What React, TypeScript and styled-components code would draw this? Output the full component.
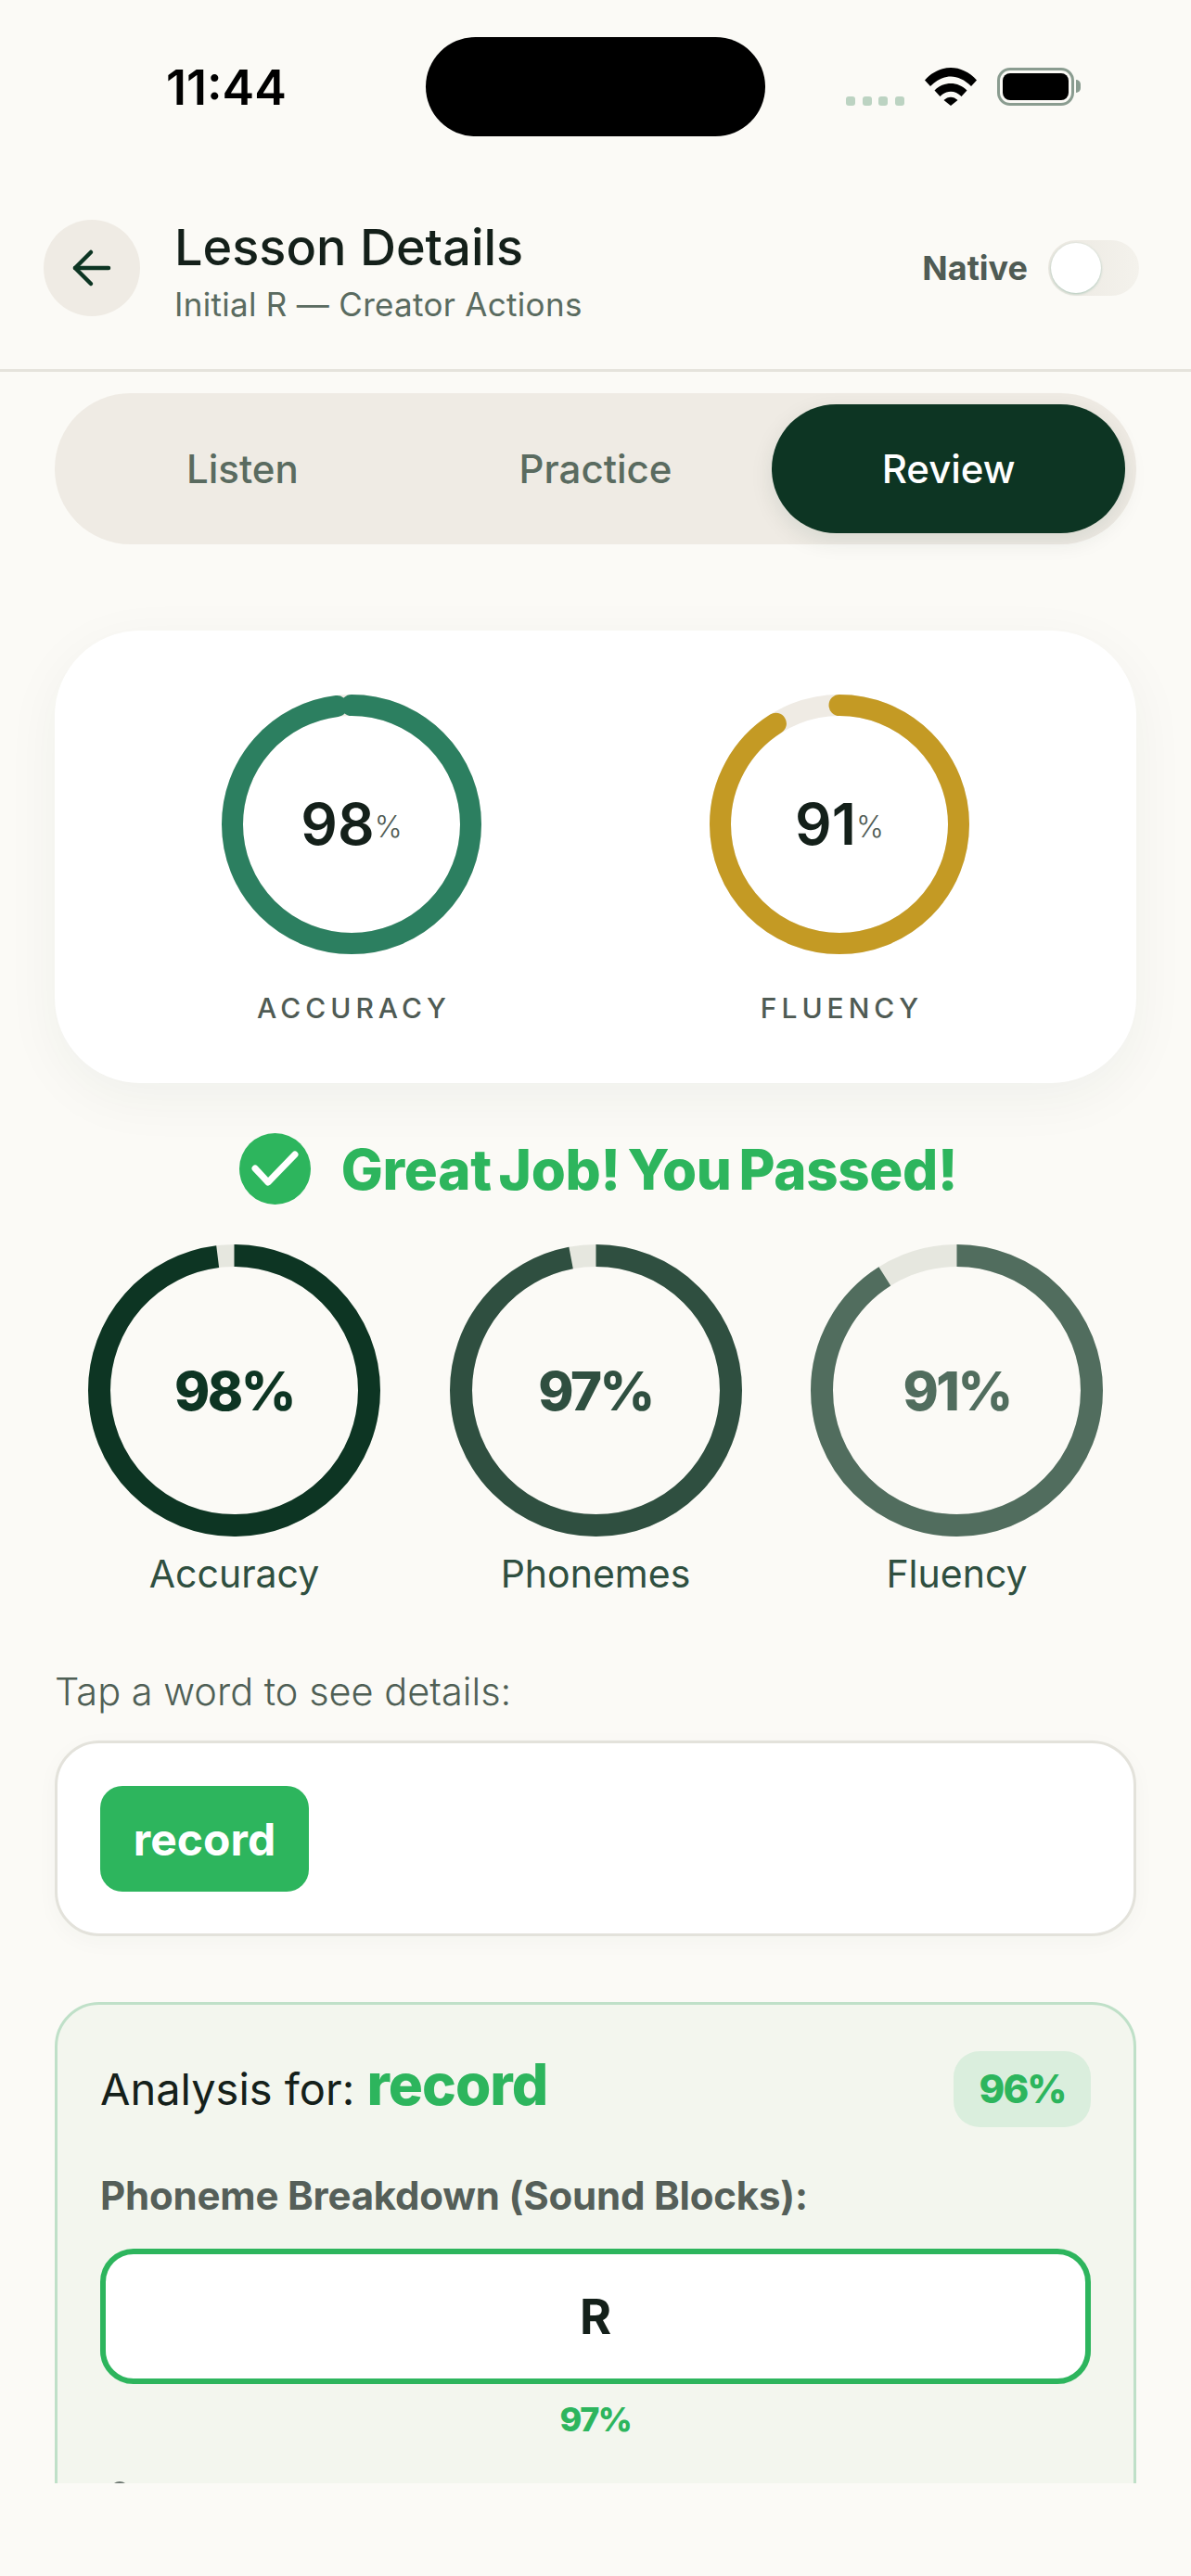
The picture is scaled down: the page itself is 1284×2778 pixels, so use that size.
import styled, { createGlobalStyle } from 'styled-components';

const GlobalStyle = createGlobalStyle`
  html, body {
    margin: 0;
    padding: 0;
    background: #fbfaf6;
    font-family: Inter, "Noto Sans", sans-serif;
  }
  * {
    box-sizing: border-box;
  }
`;

function Ring({
  size,
  stroke,
  value,
  color,
  track,
  round,
}: {
  size: number;
  stroke: number;
  value: number;
  color: string;
  track: string;
  round?: boolean;
}) {
  const r = (size - stroke) / 2;
  const c = 2 * Math.PI * r;
  return (
    <RingSvg width={size} height={size} viewBox={`0 0 ${size} ${size}`}>
      <circle cx={size / 2} cy={size / 2} r={r} fill="none" stroke={track} strokeWidth={stroke} />
      <circle
        cx={size / 2}
        cy={size / 2}
        r={r}
        fill="none"
        stroke={color}
        strokeWidth={stroke}
        strokeLinecap={round ? 'round' : 'butt'}
        strokeDasharray={`${(c * value) / 100} ${c}`}
        transform={`rotate(-90 ${size / 2} ${size / 2})`}
      />
    </RingSvg>
  );
}

const metrics = [
  { label: 'Accuracy', value: 98, color: '#0d3523' },
  { label: 'Phonemes', value: 97, color: '#2f4f40' },
  { label: 'Fluency', value: 91, color: '#516d5e' },
];

const tabs = ['Listen', 'Practice', 'Review'];

export default function App() {
  return (
    <Screen>
      <GlobalStyle />
      <StatusBar>
        <Time>11:44</Time>
        <Island />
        <StatusIcons>
          <SignalDots>
            <Dot />
            <Dot />
            <Dot />
            <Dot />
          </SignalDots>
          <svg width="56" height="41" viewBox="0 0 56 41">
            <path d="M0 13.5 C16-4.500 40-4.500 56 13.500 L50 20 C36 6 20 6 6 20 Z" fill="#000" />
            <path d="M10.500 24.500 C20 14.500 36 14.500 45.500 24.500 L39.500 31 C32.500 24 23.500 24 16.500 31 Z" fill="#000" />
            <path d="M20.500 35 C25 30.500 31 30.500 35.500 35 L28 41 Z" fill="#000" />
          </svg>
          <Battery>
            <BatteryFill />
          </Battery>
        </StatusIcons>
      </StatusBar>

      <Header>
        <BackButton>
          <svg width="44" height="44" viewBox="0 0 44 44" fill="none" stroke="#0d3523" strokeWidth="4.500" strokeLinecap="round" strokeLinejoin="round">
            <path d="M40 22H4" />
            <path d="M21 5L4 22l17 17" />
          </svg>
        </BackButton>
        <HeaderText>
          <Title>Lesson Details</Title>
          <Subtitle>Initial R — Creator Actions</Subtitle>
        </HeaderText>
        <NativeLabel>Native</NativeLabel>
        <Toggle>
          <Knob />
        </Toggle>
      </Header>

      <Content>
        <Tabs>
          {tabs.map(tab => (
            <Tab key={tab} $active={tab === 'Review'}>
              {tab}
            </Tab>
          ))}
        </Tabs>

        <ScoreCard>
          <ScoreItem>
            <RingWrap>
              <Ring size={280} stroke={23} value={98} color="#2c7f60" track="#efebe4" round />
              <RingCenter>
                <ScoreNumber>98</ScoreNumber>
                <ScoreUnit>%</ScoreUnit>
              </RingCenter>
            </RingWrap>
            <ScoreLabel>ACCURACY</ScoreLabel>
          </ScoreItem>
          <ScoreItem>
            <RingWrap>
              <Ring size={280} stroke={23} value={91} color="#c49a24" track="#efebe4" round />
              <RingCenter>
                <ScoreNumber>91</ScoreNumber>
                <ScoreUnit>%</ScoreUnit>
              </RingCenter>
            </RingWrap>
            <ScoreLabel>FLUENCY</ScoreLabel>
          </ScoreItem>
        </ScoreCard>

        <PassedRow>
          <svg width="77" height="77" viewBox="0 0 77 77">
            <circle cx="38.500" cy="38.500" r="38.500" fill="#2db55d" />
            <path d="M17 38l14 15 29-30" fill="none" stroke="#fff" strokeWidth="7" strokeLinecap="round" strokeLinejoin="round" />
          </svg>
          <PassedText>Great Job! You Passed!</PassedText>
        </PassedRow>

        <MetricRow>
          {metrics.map(m => (
            <Metric key={m.label}>
              <RingWrap>
                <Ring size={315} stroke={24} value={m.value} color={m.color} track="#e6e7df" />
                <RingCenter>
                  <MetricValue $color={m.color}>{m.value}%</MetricValue>
                </RingCenter>
              </RingWrap>
              <MetricLabel>{m.label}</MetricLabel>
            </Metric>
          ))}
        </MetricRow>

        <Hint>Tap a word to see details:</Hint>
        <WordBox>
          <WordChip>record</WordChip>
        </WordBox>

        <AnalysisCard>
          <AnalysisHead>
            <AnalysisTitle>
              Analysis for: <AnalysisWord>record</AnalysisWord>
            </AnalysisTitle>
            <ScoreChip>96%</ScoreChip>
          </AnalysisHead>
          <BreakdownTitle>Phoneme Breakdown (Sound Blocks):</BreakdownTitle>
          <PhonemeBox>R</PhonemeBox>
          <PhonemeScore>97%</PhonemeScore>
          <NextMark />
        </AnalysisCard>
      </Content>
    </Screen>
  );
}

const Screen = styled.div`
  width: 1284px;
  height: 2778px;
  background: #fbfaf6;
  overflow: hidden;
`;

const StatusBar = styled.div`
  height: 188px;
  padding: 40px 119px 0 179px;
  display: flex;
  align-items: flex-start;
`;

const Time = styled.div`
  width: 280px;
  font-size: 52px;
  line-height: 109px;
  font-weight: 600;
  color: #000;
`;

const Island = styled.div`
  width: 366px;
  height: 107px;
  border-radius: 54px;
  background: #000;
`;

const StatusIcons = styled.div`
  display: flex;
  align-items: flex-end;
  margin: 33px 0 0 87px;
`;

const SignalDots = styled.div`
  display: flex;
  gap: 7.500px;
  margin-right: 22px;
`;

const Dot = styled.div`
  width: 10px;
  height: 10px;
  border-radius: 3px;
  background: #bcd3c2;
`;

const Battery = styled.div`
  position: relative;
  width: 83px;
  height: 41px;
  margin-left: 22px;
  padding: 3px;
  border: 3px solid #8a9c90;
  border-radius: 14px;

  &::after {
    content: '';
    position: absolute;
    right: -10px;
    top: 10px;
    width: 5px;
    height: 14px;
    border-radius: 0 6px 6px 0;
    background: #8a9c90;
  }
`;

const BatteryFill = styled.div`
  width: 100%;
  height: 100%;
  border-radius: 8px;
  background: #000;
`;

const Header = styled.div`
  height: 213px;
  padding: 49px 56px 0 47px;
  display: flex;
  align-items: flex-start;
  border-bottom: 3px solid #e5e3dc;
`;

const BackButton = styled.div`
  width: 104px;
  height: 104px;
  border-radius: 50%;
  background: #efebe4;
  display: flex;
  align-items: center;
  justify-content: center;
`;

const HeaderText = styled.div`
  margin-left: 37px;
  flex: 1;
`;

const Title = styled.div`
  font-size: 54px;
  line-height: 60px;
  font-weight: 500;
  color: #14201a;
`;

const Subtitle = styled.div`
  margin-top: 10px;
  font-size: 35px;
  line-height: 42px;
  letter-spacing: 0.300px;
  color: #5a6b60;
`;

const NativeLabel = styled.div`
  margin-top: 22px;
  font-size: 36px;
  line-height: 60px;
  font-weight: 700;
  color: #4f5b54;
`;

const Toggle = styled.div`
  margin: 22px 0 0 22px;
  width: 98px;
  height: 60px;
  padding: 3px;
  border-radius: 30px;
  background: linear-gradient(90deg, #ebe8e1, #f4f2ec);
`;

const Knob = styled.div`
  width: 54px;
  height: 54px;
  border-radius: 50%;
  background: #fff;
  box-shadow: 0 1px 3px rgba(44, 127, 96, 0.35);
`;

const Content = styled.div`
  padding: 23px 59px 0;
  height: 2277px;
  overflow: hidden;
`;

const Tabs = styled.div`
  height: 163px;
  padding: 12px;
  border-radius: 82px;
  background: #efebe4;
  display: grid;
  grid-template-columns: repeat(3, 1fr);
`;

const Tab = styled.div<{ $active: boolean }>`
  border-radius: 70px;
  display: flex;
  align-items: center;
  justify-content: center;
  font-size: 42px;
  font-weight: 500;
  color: ${props => (props.$active ? '#fff' : '#5a6b60')};
  background: ${props => (props.$active ? '#0d3523' : 'transparent')};
  box-shadow: ${props => (props.$active ? '0 8px 24px rgba(13, 53, 35, 0.1)' : 'none')};
`;

const ScoreCard = styled.div`
  margin-top: 93px;
  height: 488px;
  padding-top: 69px;
  border-radius: 92px;
  background: #fff;
  box-shadow: 0 16px 60px rgba(13, 53, 35, 0.05);
  display: flex;
  justify-content: center;
  gap: 246px;
`;

const ScoreItem = styled.div`
  width: 280px;
  display: flex;
  flex-direction: column;
  align-items: center;
`;

const RingWrap = styled.div`
  position: relative;
  line-height: 0;
`;

const RingSvg = styled.svg`
  display: block;
`;

const RingCenter = styled.div`
  position: absolute;
  inset: 0;
  display: flex;
  align-items: center;
  justify-content: center;
`;

const ScoreNumber = styled.span`
  font-size: 62px;
  line-height: 62px;
  font-weight: 600;
  color: #14201a;
`;

const ScoreUnit = styled.span`
  margin-top: 6px;
  font-size: 32px;
  line-height: 32px;
  font-weight: 300;
  color: #4f5b54;
`;

const ScoreLabel = styled.div`
  margin-top: 40px;
  margin-right: -5px;
  font-size: 30px;
  line-height: 36px;
  font-weight: 500;
  letter-spacing: 5px;
  color: #4f5b54;
`;

const PassedRow = styled.div`
  margin-top: 54px;
  padding-left: 6px;
  height: 77px;
  display: flex;
  align-items: center;
  justify-content: center;
  gap: 33px;
`;

const PassedText = styled.div`
  font-size: 60px;
  font-weight: 800;
  letter-spacing: -0.300px;
  word-spacing: -5px;
  color: #2db55d;
`;

const MetricRow = styled.div`
  margin-top: 43px;
  display: flex;
  justify-content: center;
  gap: 74.500px;
`;

const Metric = styled.div`
  width: 315px;
  display: flex;
  flex-direction: column;
  align-items: center;
`;

const MetricValue = styled.div<{ $color: string }>`
  font-size: 58px;
  line-height: 60px;
  font-weight: 800;
  letter-spacing: -2.500px;
  color: ${props => props.$color};
`;

const MetricLabel = styled.div`
  margin-top: 15px;
  font-size: 41px;
  line-height: 50px;
  color: #2f4f40;
`;

const Hint = styled.div`
  margin-top: 79px;
  font-size: 41.500px;
  line-height: 46px;
  font-weight: 300;
  color: #4f5f55;
`;

const WordBox = styled.div`
  margin-top: 30px;
  height: 211px;
  padding: 46px;
  border: 3px solid #e3e2db;
  border-radius: 48px;
  background: #fff;
  box-shadow: 0 6px 24px rgba(13, 53, 35, 0.03);
`;

const WordChip = styled.div`
  width: 225px;
  height: 114px;
  border-radius: 24px;
  background: #2db55d;
  display: flex;
  align-items: center;
  justify-content: center;
  font-size: 48px;
  font-weight: 700;
  color: #fff;
`;

const AnalysisCard = styled.div`
  margin-top: 71px;
  height: 700px;
  padding: 47px 46px 0;
  border: 3px solid #bfe0c8;
  border-radius: 48px;
  background: #f3f6ee;
`;

const AnalysisHead = styled.div`
  height: 82px;
  display: flex;
  align-items: center;
  justify-content: space-between;
`;

const AnalysisTitle = styled.div`
  margin-top: -5px;
  font-size: 47px;
  font-weight: 400;
  color: #14201a;
`;

const AnalysisWord = styled.span`
  font-size: 62px;
  font-weight: 800;
  letter-spacing: -1px;
  color: #2db55d;
`;

const ScoreChip = styled.div`
  margin-top: 5px;
  width: 148px;
  height: 82px;
  border-radius: 28px;
  background: #daeedd;
  display: flex;
  align-items: center;
  justify-content: center;
  font-size: 42px;
  font-weight: 800;
  letter-spacing: -2px;
  color: #2db55d;
`;

const BreakdownTitle = styled.div`
  margin-top: 52px;
  font-size: 42px;
  line-height: 50px;
  font-weight: 700;
  letter-spacing: -0.200px;
  color: #555f59;
`;

const PhonemeBox = styled.div`
  margin-top: 32px;
  height: 146px;
  border: 6px solid #2db55d;
  border-radius: 36px;
  background: #fff;
  display: flex;
  align-items: center;
  justify-content: center;
  font-size: 52px;
  font-weight: 700;
  color: #14201a;
`;

const PhonemeScore = styled.div`
  margin-top: 16px;
  text-align: center;
  font-size: 36px;
  line-height: 44px;
  font-weight: 800;
  letter-spacing: -1.500px;
  color: #2db55d;
`;

const NextMark = styled.div`
  margin: 45px 0 0 11px;
  width: 20px;
  height: 20px;
  border-radius: 50%;
  background: #6b756f;
`;
